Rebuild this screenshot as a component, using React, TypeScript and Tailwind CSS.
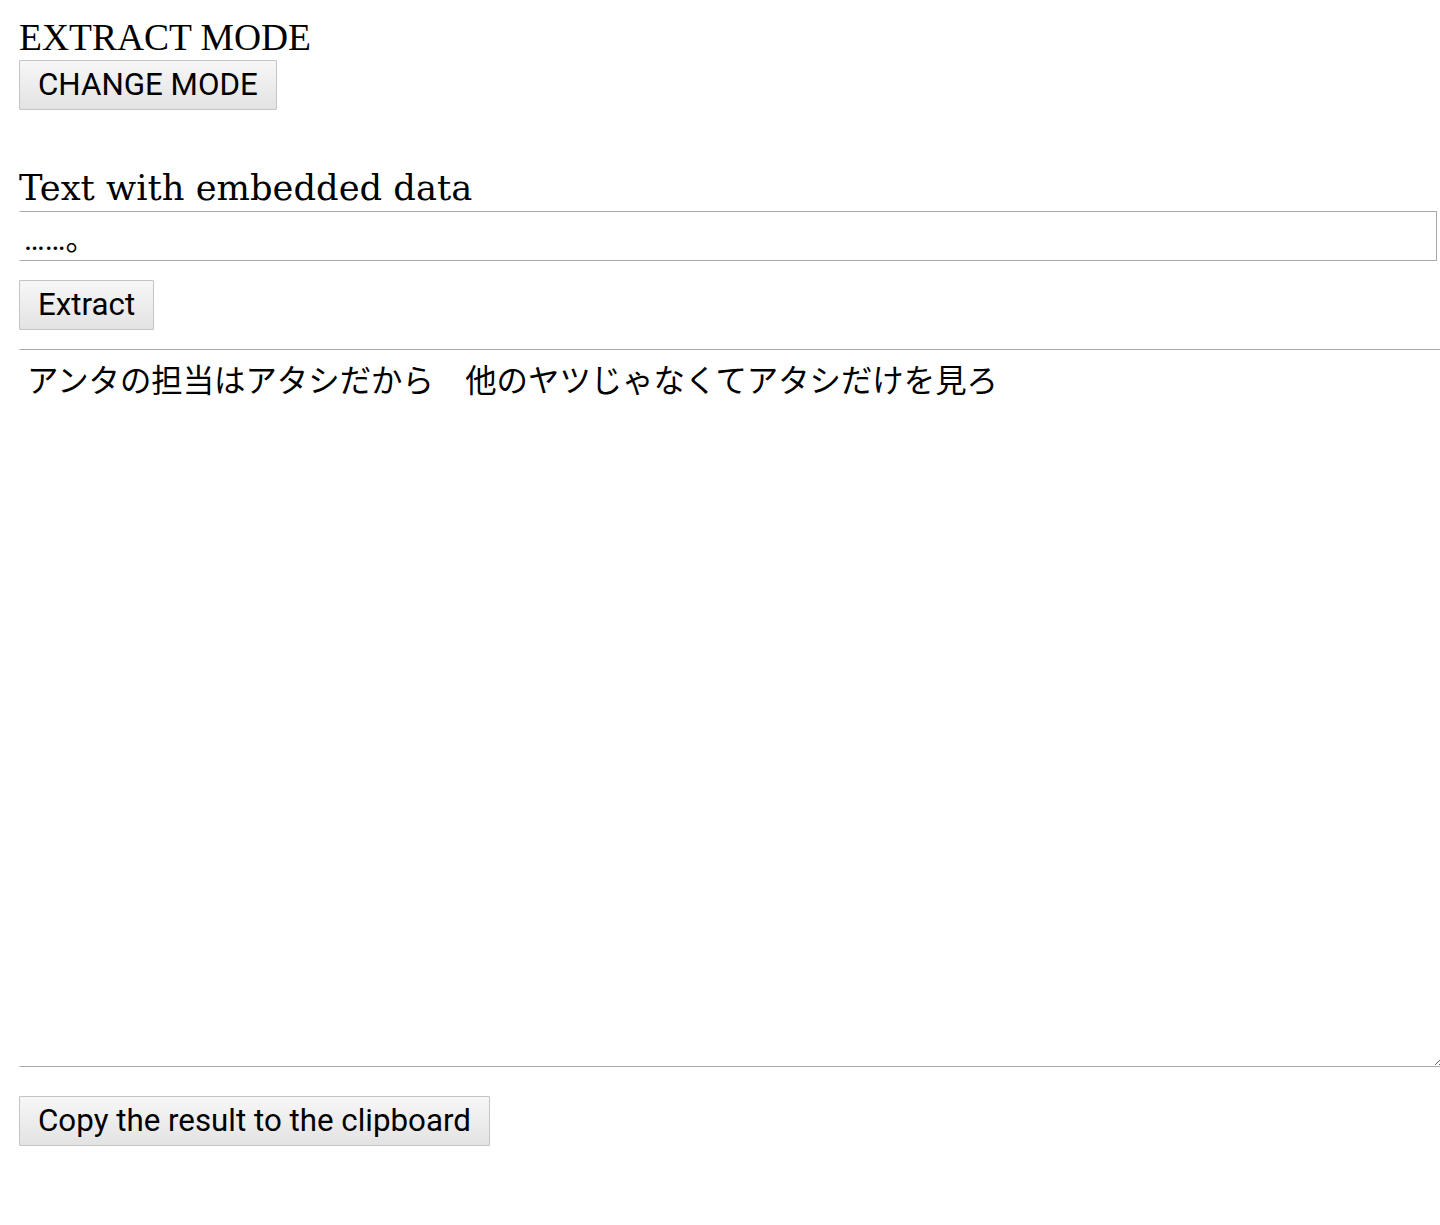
import React, { useState } from 'react';

const btn =
  "block h-[50px] px-[18px] border border-[#c4c4c4] rounded-[1px] bg-gradient-to-b from-[#f7f7f7] to-[#e3e3e3] text-[31.3px] text-black font-['Roboto','Noto_Sans_CJK_JP',sans-serif] leading-none whitespace-nowrap";

export default function App() {
  const [input, setInput] = useState('……。');
  const [result, setResult] = useState('アンタの担当はアタシだから　他のヤツじゃなくてアタシだけを見ろ');

  return (
    <div className="min-h-screen bg-white text-black pl-[19px]">
      <h1 className="font-['Liberation_Serif',serif] text-[37.5px] leading-[42px] pt-[17px] h-[60px] font-normal">
        EXTRACT MODE
      </h1>
      <button className={btn}>CHANGE MODE</button>

      <h2 className="mt-[54px] h-[47px] font-['DejaVu_Serif',serif] text-[35.3px] leading-[47px] font-normal whitespace-nowrap">
        Text with embedded data
      </h2>
      <input
        value={input}
        onChange={(e) => setInput(e.target.value)}
        className="block w-[1418px] h-[50px] border border-[#a9a9a9] border-l-transparent px-[4px] text-[31px] font-['Roboto','Noto_Sans_CJK_JP',sans-serif] outline-none"
      />
      <button className={`${btn} mt-[19px]`}>Extract</button>

      <textarea
        value={result}
        onChange={(e) => setResult(e.target.value)}
        className="block mt-[19px] w-[1425px] h-[718px] border border-[#a9a9a9] border-l-transparent px-[7px] py-[10px] text-[31.4px] leading-[38px] font-['Noto_Sans_CJK_JP',sans-serif] outline-none resize"
      />
      <button className={`${btn} mt-[29px]`}>Copy the result to the clipboard</button>
    </div>
  );
}
